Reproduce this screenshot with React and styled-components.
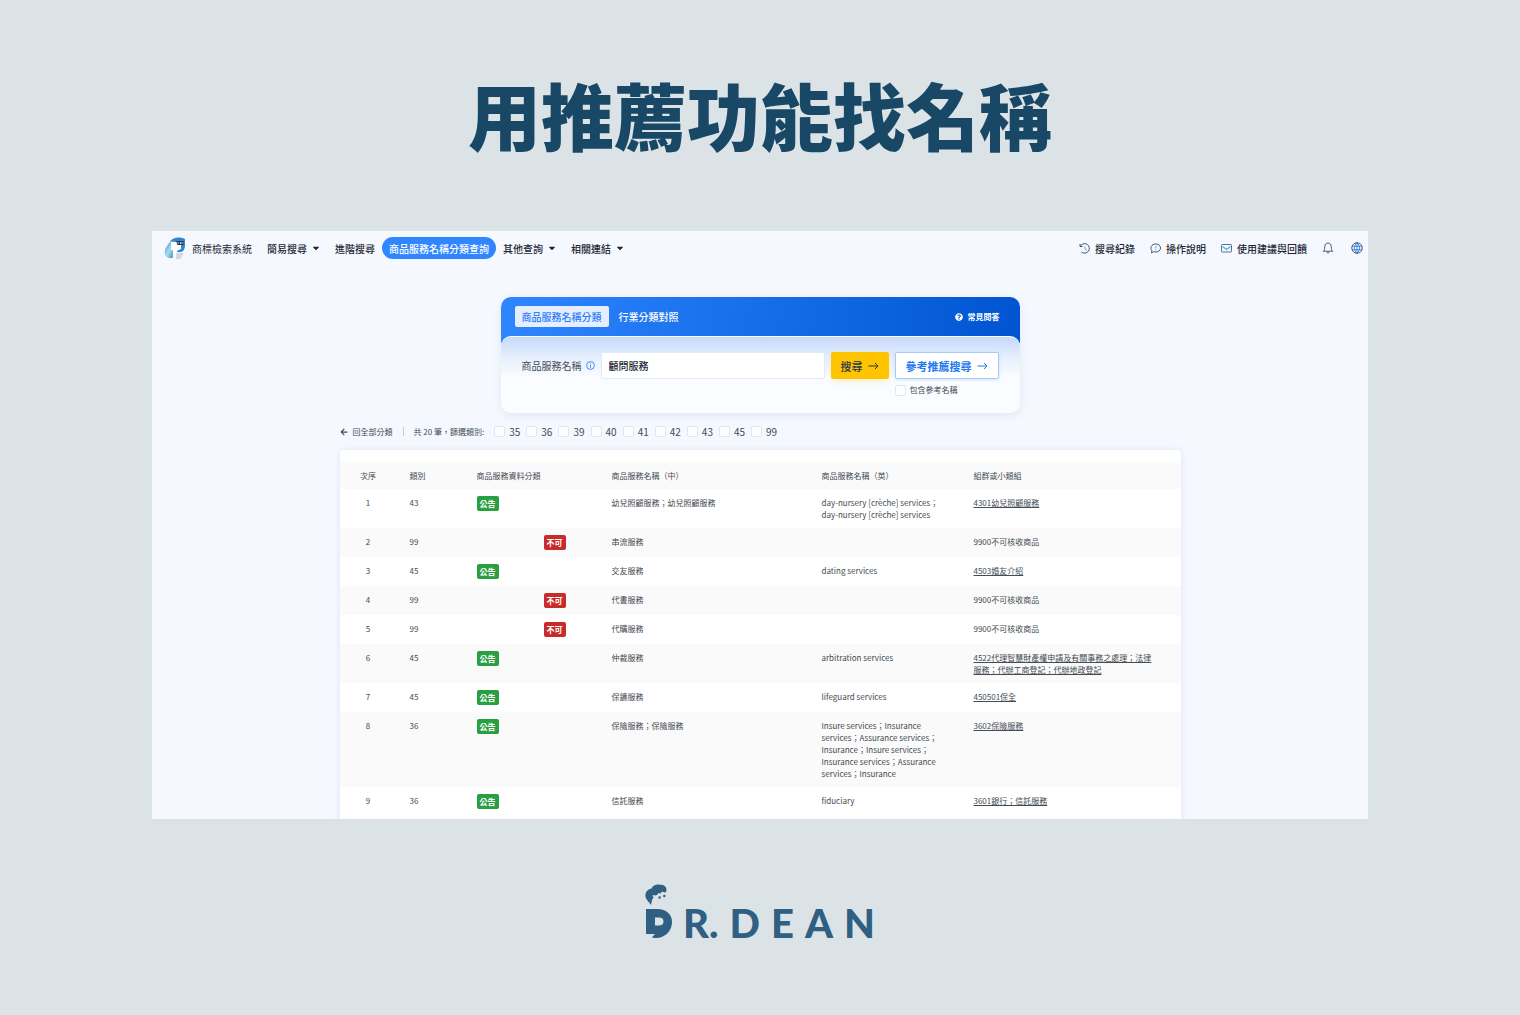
import styled, { createGlobalStyle } from 'styled-components';
import { useState } from 'react';
import { FaCaretDown, FaQuestionCircle, FaArrowLeft } from 'react-icons/fa';

const classes = ['35', '36', '39', '40', '41', '42', '43', '45', '99'];

const rows = [
  { cls: '43', ok: true, zh: '幼兒照顧服務；幼兒照顧服務', en: 'day-nursery [crèche] services；day-nursery [crèche] services', group: '4301幼兒照顧服務' },
  { cls: '99', ok: false, zh: '串流服務', en: '', group: '9900不可核收商品' },
  { cls: '45', ok: true, zh: '交友服務', en: 'dating services', group: '4503婚友介紹' },
  { cls: '99', ok: false, zh: '代書服務', en: '', group: '9900不可核收商品' },
  { cls: '99', ok: false, zh: '代購服務', en: '', group: '9900不可核收商品' },
  { cls: '45', ok: true, zh: '仲裁服務', en: 'arbitration services', group: '4522代理智慧財產權申請及有關事務之處理；法律服務；代辦工商登記；代辦地政登記' },
  { cls: '45', ok: true, zh: '保鑣服務', en: 'lifeguard services', group: '450501保全' },
  { cls: '36', ok: true, zh: '保險服務；保險服務', en: 'Insure services；Insurance services；Assurance services；Insurance；Insure services；Insurance services；Assurance services；Insurance', group: '3602保險服務' },
  { cls: '36', ok: true, zh: '信託服務', en: 'fiduciary', group: '3601銀行；信託服務' },
];

function Arrow() {
  return (
    <svg width="11" height="8" viewBox="0 0 11 8" fill="none" stroke="currentColor" aria-hidden="true">
      <path d="M0.5 4H10M7 1l3 3-3 3" />
    </svg>
  );
}

function SiteMark() {
  return (
    <svg width="22" height="22" viewBox="0 0 22 22" aria-hidden="true">
      <defs>
        <linearGradient id="drop" x1="0" y1="0" x2="1" y2="1">
          <stop offset="0" stopColor="#2f86c8" />
          <stop offset="0.5" stopColor="#a9dcf3" />
          <stop offset="1" stopColor="#2a7fc0" />
        </linearGradient>
      </defs>
      <path d="M7 4C3 8 .5 12 .8 16c.3 4 3 5.200 6 5 3-.2 4.200-2 4.200-5V9H7z" fill="url(#drop)" />
      <path d="M6 4.500C9 0 16-.5 21 2v7c-.5 4-2 6-5 6h-3V5z" fill="#2f86c8" />
      <path d="M7 5h5v3h5v4l-4 2v6H9v-7H7z" fill="#fff" />
      <path d="M12 4h8v4h-6.500z" fill="#24405c" />
      <path d="M13.500 6h1M16 6h1.500M18.500 6h.8" stroke="#dfe8f0" strokeWidth="1.500" />
      <path d="M12 17h7M12 19h6M12 21h5" stroke="#9aa5ad" strokeWidth=".8" />
    </svg>
  );
}

function App() {
  const [keyword, setKeyword] = useState('顧問服務');

  return (
    <Slide>
      <GlobalStyle />
      <Title>用推薦功能找名稱</Title>
      <Frame>
        <Header>
          <Brand href="#"><SiteMark />商標檢索系統</Brand>
          <Nav>
            <NavButton>簡易搜尋<FaCaretDown /></NavButton>
            <NavButton>進階搜尋</NavButton>
            <NavButton $active>商品服務名稱分類查詢</NavButton>
            <NavButton>其他查詢<FaCaretDown /></NavButton>
            <NavButton>相關連結<FaCaretDown /></NavButton>
          </Nav>
          <Tools>
            <ToolButton>
              <svg width="11" height="11" viewBox="0 0 22 22" fill="none" stroke="#3a4552" strokeWidth="1.800" aria-hidden="true">
                <path d="M3 6a9.500 9.500 0 1 1 2 12M2 2v5h5" />
                <path d="M12 7v5l4 3" stroke="#4aa3f0" />
              </svg>
              搜尋紀錄
            </ToolButton>
            <ToolButton>
              <svg width="11" height="11" viewBox="0 0 22 22" fill="none" stroke="#3a4552" strokeWidth="1.800" aria-hidden="true">
                <path d="M3 20l.8-4.500C-1 10 3 2 11.500 2 17 2 21 5.500 21 10s-4 8-9.500 8c-2 0-3-.2-4.500-.8z" />
                <path d="M11.500 6v5M11.500 13v2" stroke="#4aa3f0" />
              </svg>
              操作說明
            </ToolButton>
            <ToolButton>
              <svg width="11" height="11" viewBox="0 0 22 22" fill="none" stroke="#4a6478" strokeWidth="1.800" aria-hidden="true">
                <rect x="1" y="3" width="20" height="15" rx="1.500" />
                <path d="M3 7l8 6 8-6" stroke="#35b3ee" strokeWidth="2.200" />
              </svg>
              使用建議與回饋
            </ToolButton>
            <IconButton aria-label="通知">
              <svg width="12" height="12" viewBox="0 0 24 24" fill="none" stroke="#3a4552" strokeWidth="1.800" aria-hidden="true">
                <path d="M2.500 18.500c2-2 3-3 3-9C5.500 5 8 2 12 2s6.500 3 6.500 7.500c0 6 1 7 3 9z" />
                <path d="M9.500 21.500h5" stroke="#2f86ff" strokeWidth="2.500" />
              </svg>
            </IconButton>
            <IconButton aria-label="語言">
              <svg width="12" height="12" viewBox="0 0 24 24" fill="none" stroke="#2f7fdd" strokeWidth="1.800" aria-hidden="true">
                <path d="M12 1.500c-7 6-7 15 0 21 7-6 7-15 0-21zM12 1.500v21M2 8.500h20M2 15.500h20" />
                <circle cx="12" cy="12" r="10.500" stroke="#3a4f66" />
              </svg>
            </IconButton>
          </Tools>
        </Header>

        <SearchCard>
          <Tabs>
            <Tab $active>商品服務名稱分類</Tab>
            <Tab>行業分類對照</Tab>
            <Faq href="#"><FaQuestionCircle />常見問答</Faq>
          </Tabs>
          <SearchBody onSubmit={(e) => e.preventDefault()}>
            <FieldLabel htmlFor="keyword">
              商品服務名稱
              <svg width="9" height="9" viewBox="0 0 18 18" fill="none" stroke="#2f80ff" strokeWidth="1.800" aria-hidden="true">
                <circle cx="9" cy="9" r="7.800" />
                <path d="M9 8v5.500M9 4.500v2" />
              </svg>
            </FieldLabel>
            <Field id="keyword" value={keyword} onChange={(e) => setKeyword(e.target.value)} />
            <SearchButton>搜尋<Arrow /></SearchButton>
            <Suggest>
              <SuggestButton type="button">參考推薦搜尋<Arrow /></SuggestButton>
              <Check $small><input type="checkbox" />包含參考名稱</Check>
            </Suggest>
          </SearchBody>
        </SearchCard>

        <Results>
          <FilterBar>
            <Back href="#"><FaArrowLeft />回全部分類</Back>
            <Divider />
            <Count>共 20 筆，篩選類別:</Count>
            <Filters>
              {classes.map((c) => (
                <Check key={c}><input type="checkbox" />{c}</Check>
              ))}
            </Filters>
          </FilterBar>
          <TableCard>
            <Table>
              <colgroup>
                <Col $w={62} /><Col $w={67} /><Col $w={67} /><Col $w={68} />
                <Col $w={210} /><Col $w={152} /><Col $w={215} />
              </colgroup>
              <thead>
                <tr>
                  <th>次序</th>
                  <th>類別</th>
                  <th colSpan="2">商品服務資料分類</th>
                  <th>商品服務名稱（中）</th>
                  <th>商品服務名稱（英）</th>
                  <th>組群或小類組</th>
                </tr>
              </thead>
              <tbody>
                {rows.map((r, i) => (
                  <tr key={i}>
                    <td>{i + 1}</td>
                    <td>{r.cls}</td>
                    <td>{r.ok && <Badge>公告</Badge>}</td>
                    <td>{!r.ok && <Badge $denied>不可</Badge>}</td>
                    <td>{r.zh}</td>
                    <td>{r.en}</td>
                    <td>{r.ok ? <a href="#">{r.group}</a> : r.group}</td>
                  </tr>
                ))}
              </tbody>
            </Table>
          </TableCard>
        </Results>
      </Frame>
      <Logo>
        <svg width="28" height="54" viewBox="0 0 28 54" fill="#2f5f82" aria-hidden="true">
          <path d="M6 21C4 18 0 15 .4 11 .8 7 3.500 5 6.500 4.500 8 1 12-.2 15 .8c4-.6 7 2.200 6.400 5.700-.2 1.700-1 2.500-2.400 1.700l-2-.6-1.500 2-2-.5-1.500 2-2.500.5-1.500-.8-.5 1.500 1.200 1-1.700 2.700z" />
          <circle cx="14.600" cy="13.500" r="1.200" />
          <circle cx="19.300" cy="12" r="1.200" />
          <path fillRule="evenodd" d="M1 25h11c10 0 15 6 15 13 0 9-7 16-16 16-2 0-3-.2-4-.8l3-3.200H1zM10 33.500v8h4c3 0 4.500-1.500 4.500-4s-1.500-4-4.500-4z" />
        </svg>
        <LogoText>
          <span>R.</span><span>D</span><span>E</span><span>A</span><span>N</span>
        </LogoText>
      </Logo>
    </Slide>
  );
}

const GlobalStyle = createGlobalStyle`
  * {
    box-sizing: border-box;
  }
  body {
    margin: 0;
    background: #dce3e6;
    font-family: "Noto Sans CJK TC", "Noto Sans", sans-serif;
    color: #444b52;
  }
  button, input {
    font-family: inherit;
  }
  button {
    border: 0;
    background: none;
    padding: 0;
    white-space: nowrap;
    cursor: pointer;
  }
  svg {
    flex-shrink: 0;
  }
`

const Slide = styled.main`
  min-height: 100vh;
  display: flex;
  flex-direction: column;
  align-items: center;
`

const Title = styled.h1`
  margin: 59px 0 64px;
  font-size: 73px;
  line-height: 108px;
  font-weight: 900;
  color: #194866;
`

const Frame = styled.section`
  width: 80%;
  aspect-ratio: 1216 / 588;
  overflow: hidden;
  background: #f5f8ff;
`

const Header = styled.header`
  display: flex;
  align-items: center;
  height: 34px;
  padding: 0 5px 0 12px;
  font-size: 10px;
  color: #1d2733;
`

const Brand = styled.a`
  display: flex;
  align-items: center;
  gap: 6px;
  color: inherit;
  text-decoration: none;
  white-space: nowrap;
`

const Nav = styled.nav`
  display: flex;
  margin-left: 8px;
`

const NavButton = styled.button`
  display: flex;
  align-items: center;
  gap: 4px;
  height: 22px;
  padding: 0 7px;
  border-radius: 11px;
  font-size: 10px;
  font-weight: 500;
  color: ${({ $active }) => ($active ? '#fff' : '#1d2733')};
  background: ${({ $active }) => ($active ? '#2f86ff' : 'none')};
`

const Tools = styled.div`
  display: flex;
  align-items: center;
  gap: 15px;
  margin-left: auto;
`

const ToolButton = styled.button`
  display: flex;
  align-items: center;
  gap: 5px;
  font-size: 10px;
  font-weight: 500;
  color: #1d2733;
`

const IconButton = styled.button`
  display: flex;
  padding-right: 2px;
  & + & {
    padding-right: 0;
  }
`

const SearchCard = styled.section`
  width: 42%;
  min-width: 519px;
  margin: 32px auto 0;
  border-radius: 10px;
  background: linear-gradient(100deg, #2f86ff, #0054d1) 0 0 / 100% 46px no-repeat;
  box-shadow: 0 3px 8px rgba(60, 90, 140, 0.1);
`

const Tabs = styled.div`
  display: flex;
  align-items: center;
  gap: 3px;
  height: 39px;
  padding: 0 20px 0 14px;
`

const Tab = styled.button`
  height: 21px;
  padding: 0 7px;
  border-radius: 2px;
  font-size: 10px;
  font-weight: 500;
  color: ${({ $active }) => ($active ? '#2f80f5' : '#fff')};
  background: ${({ $active }) => ($active ? '#e4eefe' : 'none')};
`

const Faq = styled.a`
  display: flex;
  align-items: center;
  gap: 5px;
  margin-left: auto;
  font-size: 8px;
  font-weight: 700;
  color: #fff;
  text-decoration: none;
`

const SearchBody = styled.form`
  display: flex;
  align-items: flex-start;
  gap: 6px;
  height: 77px;
  padding: 15px 21px 0;
  border-top: 1px solid #fff;
  border-radius: 10px;
  background: linear-gradient(#c6d9f8, #e6effd 20px, #fafcff 40px);
`

const FieldLabel = styled.label`
  display: flex;
  align-items: center;
  gap: 4px;
  height: 27px;
  font-size: 10px;
`

const Field = styled.input`
  flex: 1;
  min-width: 0;
  height: 27px;
  padding: 0 7px;
  border: 1px solid #dfebfb;
  border-radius: 2px;
  background: #fff;
  font-size: 10px;
  font-weight: 500;
  color: #1d2733;
`

const SearchButton = styled.button`
  display: flex;
  align-items: center;
  gap: 5px;
  height: 27px;
  padding: 0 10px;
  border-radius: 2px;
  background: #ffc400;
  box-shadow: 0 3px 6px rgba(255, 196, 0, 0.2);
  font-size: 11px;
  font-weight: 500;
  color: #263648;
`

const Suggest = styled.div`
  display: flex;
  flex-direction: column;
  gap: 5px;
`

const SuggestButton = styled(SearchButton)`
  background: #fff;
  border: 1px solid #a9c9fa;
  box-shadow: 0 1px 3px rgba(47, 128, 255, 0.2);
  font-weight: 700;
  color: #2477ee;
`

const Check = styled.label`
  display: flex;
  align-items: center;
  gap: 4px;
  font-size: ${({ $small }) => ($small ? '8px' : '10px')};
  line-height: 12px;
  input {
    appearance: none;
    width: 11px;
    height: 11px;
    margin: 0;
    border: 1px solid #d9e8fc;
    border-radius: 2px;
    background: #fff;
  }
`

const Results = styled.section`
  width: 69%;
  min-width: 841px;
  margin: 0 auto;
  font-size: 8px;
`

const FilterBar = styled.div`
  display: flex;
  align-items: center;
  height: 37px;
`

const Back = styled.a`
  display: flex;
  align-items: center;
  gap: 5px;
  color: inherit;
  text-decoration: none;
`

const Divider = styled.span`
  width: 1px;
  height: 9px;
  margin: 0 10px;
  background: #c8ccd2;
`

const Count = styled.span`
  margin-right: 10px;
`

const Filters = styled.div`
  display: flex;
  gap: 6px;
`

const TableCard = styled.div`
  padding: 12px 0 24px;
  border-radius: 4px;
  background: #fff;
  box-shadow: 0 0 6px rgba(60, 90, 140, 0.12);
`

const Table = styled.table`
  width: 100%;
  table-layout: fixed;
  border-collapse: collapse;
  line-height: 12px;
  thead tr, tbody tr:nth-child(even) {
    background: #fafafa;
  }
  th, td {
    padding: 8px 16px 7px 8px;
    text-align: left;
    vertical-align: top;
    font-weight: 400;
  }
  th {
    white-space: nowrap;
  }
  th:first-child, td:first-child {
    padding-left: 0;
    padding-right: 5px;
    text-align: center;
  }
  td:last-child {
    padding-right: 24px;
  }
  td a {
    color: inherit;
    text-underline-offset: 1px;
  }
`

const Col = styled.col`
  width: ${({ $w }) => ($w / 841) * 100}%;
`

const Badge = styled.span`
  display: block;
  width: 22px;
  height: 15px;
  margin-top: -1px;
  border-radius: 2px;
  background: ${({ $denied }) => ($denied ? '#c92a2a' : '#28a042')};
  color: #fff;
  font-size: 8px;
  line-height: 15px;
  font-weight: 700;
  text-align: center;
`

const Logo = styled.footer`
  display: flex;
  align-items: flex-end;
  gap: 10px;
  margin-top: 65px;
`

const LogoText = styled.div`
  display: flex;
  gap: 11px;
  font-family: Lato, sans-serif;
  font-size: 40px;
  line-height: 30px;
  font-weight: 900;
  color: #2f5f82;
`

export default App;
